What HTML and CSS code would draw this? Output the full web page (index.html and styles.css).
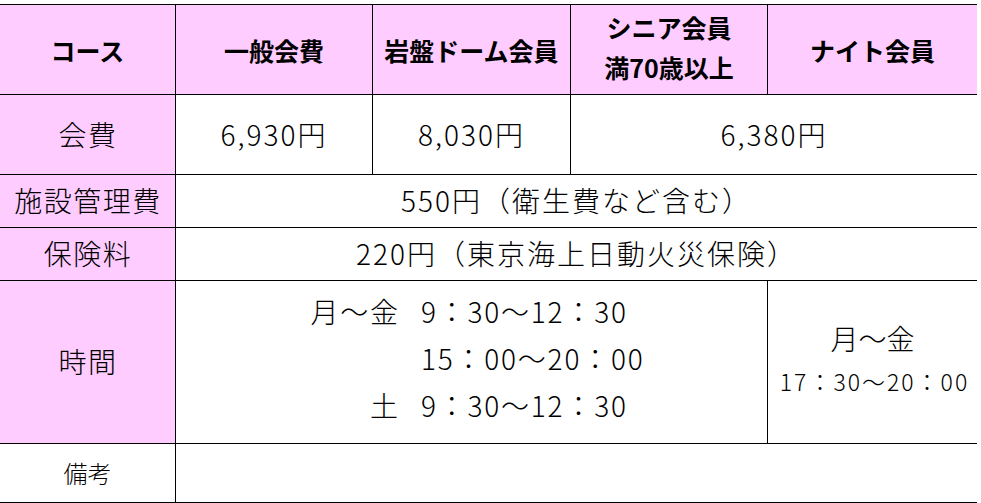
FILE: index.html
```html
<!DOCTYPE html>
<html lang="ja">
<head>
<meta charset="utf-8">
<link rel="stylesheet" href="styles.css">
</head>
<body>
<div class="table">
  <div class="cell head">コース</div>
  <div class="cell head">一般会費</div>
  <div class="cell head">岩盤ドーム会員</div>
  <div class="cell head two">シニア会員<br>満70歳以上</div>
  <div class="cell head last">ナイト会員</div>

  <div class="cell label">会費</div>
  <div class="cell">6,930円</div>
  <div class="cell">8,030円</div>
  <div class="cell span2 last">6,380円</div>

  <div class="cell label">施設管理費</div>
  <div class="cell span4 last">550円（衛生費など含む）</div>

  <div class="cell label">保険料</div>
  <div class="cell span4 last">220円（東京海上日動火災保険）</div>

  <div class="cell label">時間</div>
  <div class="cell span3 hours-cell">
    <div class="hours">
      <span class="day">月～金</span><span class="time">9：30～12：30</span>
      <span class="day"></span><span class="time">15：00～20：00</span>
      <span class="day">土</span><span class="time">9：30～12：30</span>
    </div>
  </div>
  <div class="cell last night">
    <div class="night-day">月～金</div>
    <div class="night-time">17：30～20：00</div>
  </div>

  <div class="cell note">備考</div>
  <div class="cell span4 last"></div>
</div>
</body>
</html>
```

FILE: styles.css
```css
* { box-sizing: border-box; }
html, body { margin: 0; padding: 0; background: #fff; }
body {
  font-family: "Noto Sans CJK JP", "Noto Sans", sans-serif;
  font-weight: 300;
  color: #000;
}
.table {
  margin-top: 4px;
  width: 977px;
  display: grid;
  grid-template-columns: 176px 197px 198px 197px 209px;
  grid-template-rows: 90px 80px 53px 53px 163px 59px;
  border-top: 1.5px solid #000;
}
.cell {
  display: flex;
  align-items: center;
  justify-content: center;
  text-align: center;
  border-right: 1.5px solid #000;
  border-bottom: 1.5px solid #000;
  font-size: 28px;
  line-height: 1.2;
  letter-spacing: 2px;
  white-space: nowrap;
}
.cell.last { border-right: none; }
.head {
  background: #ffccff;
  font-weight: bold;
  font-size: 25px;
  letter-spacing: 0;
}
.head.two { line-height: 40px; padding-bottom: 5px; }
.label {
  background: #ffccff;
  letter-spacing: 1.5px;
  padding-left: 1px;
}
.note { font-size: 24px; letter-spacing: 0; }
.span2 { grid-column: span 2; }
.span3 { grid-column: span 3; }
.span4 { grid-column: span 4; }
.hours-cell { padding-bottom: 8px; }
.hours {
  display: grid;
  grid-template-columns: auto auto;
  column-gap: 21px;
  line-height: 47px;
  letter-spacing: 1.8px;
  margin-left: 12px;
}
.day { text-align: right; }
.time { text-align: left; }
.night {
  flex-direction: column;
  padding-bottom: 4px;
}
.night-day { line-height: 43px; letter-spacing: 0; }
.night-time { font-size: 23px; line-height: 43px; letter-spacing: 2px; padding-left: 4px; }
```
